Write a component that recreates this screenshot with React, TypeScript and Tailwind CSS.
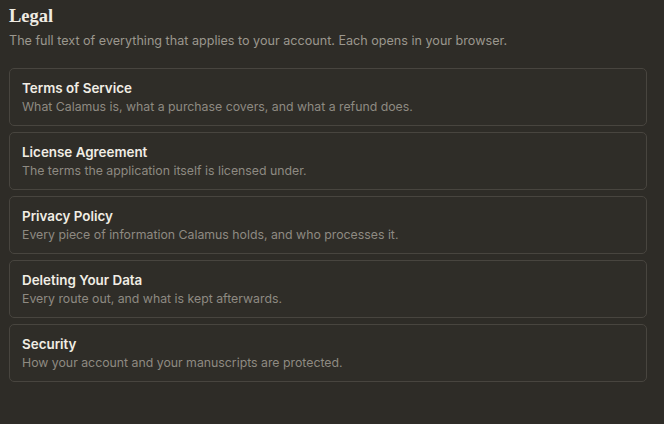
const items = [
  { title: "Terms of Service", desc: "What Calamus is, what a purchase covers, and what a refund does." },
  { title: "License Agreement", desc: "The terms the application itself is licensed under." },
  { title: "Privacy Policy", desc: "Every piece of information Calamus holds, and who processes it." },
  { title: "Deleting Your Data", desc: "Every route out, and what is kept afterwards." },
  { title: "Security", desc: "How your account and your manuscripts are protected." },
];

export default function App() {
  return (
    <div className="w-[664px] h-[424px] bg-[#2e2c27] font-['Inter',sans-serif] overflow-hidden">
      <div className="pl-[9px] pr-[17px] pt-[4px]">
        <h1 className="font-['Liberation_Serif',serif] text-[18.5px] font-bold text-[#efebe3] leading-[24px]">Legal</h1>
        <p className="mt-[4px] text-[12.6px] leading-[18px] text-[#9b978e]">
          The full text of everything that applies to your account. Each opens in your browser.
        </p>
        <div className="mt-[18px] flex flex-col gap-[6px]">
          {items.map((it) => (
            <div
              key={it.title}
              className="h-[58px] w-full flex flex-col justify-center rounded-[5px] border border-[#48453f] bg-[#2f2d28] px-[12px] cursor-pointer"
            >
              <div className="text-[13.4px] font-semibold leading-[20px] text-[#f1ede5]">{it.title}</div>
              <div className="text-[12.3px] leading-[18px] text-[#8e8a82]">{it.desc}</div>
            </div>
          ))}
        </div>
      </div>
    </div>
  );
}
